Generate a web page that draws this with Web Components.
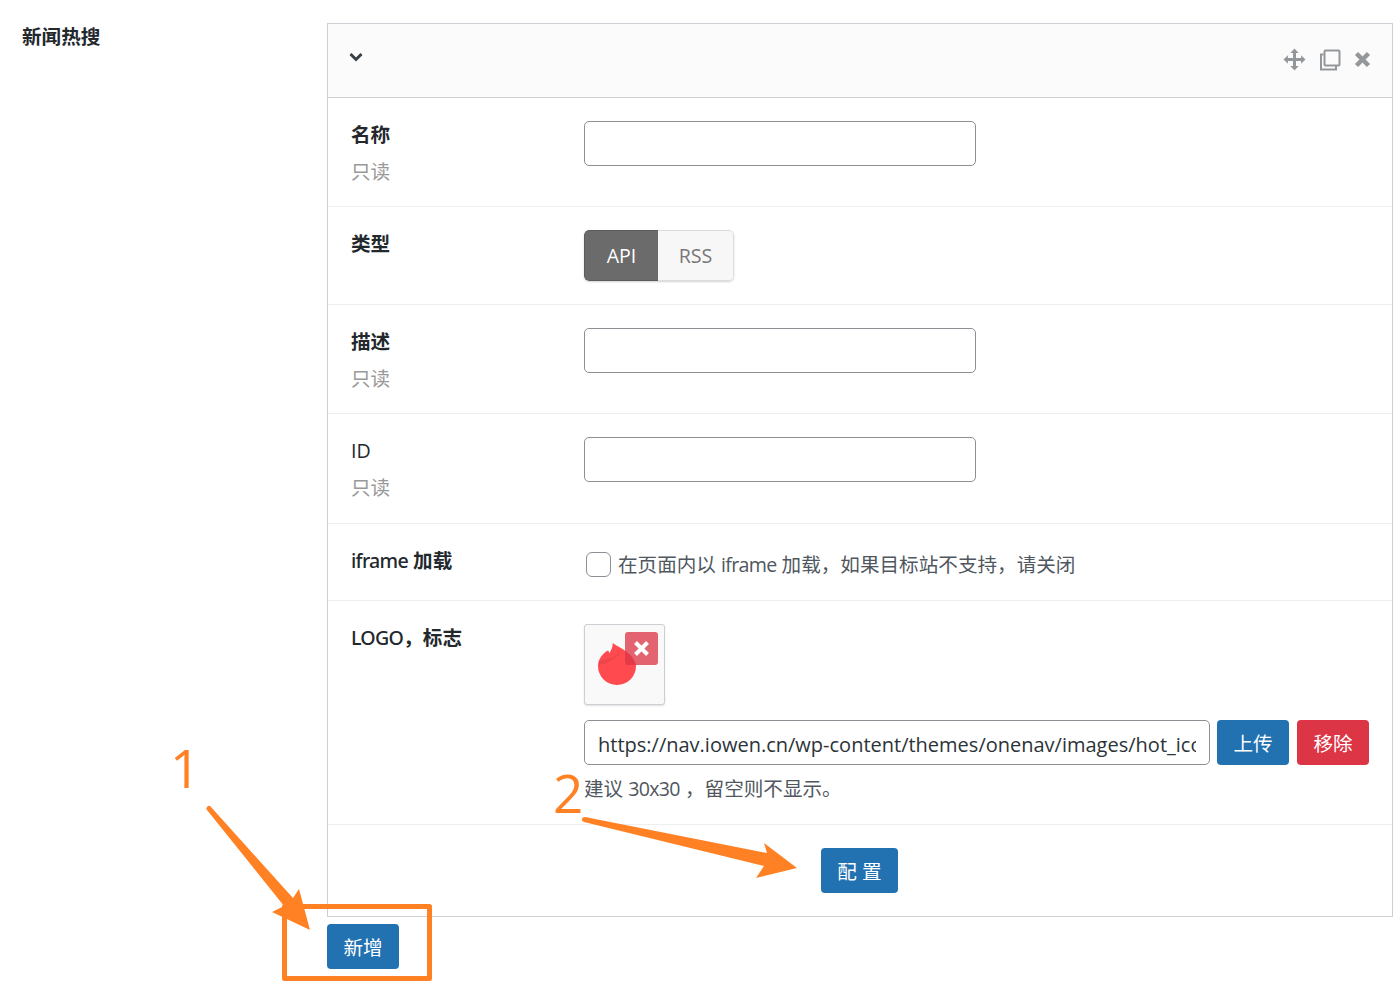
<!DOCTYPE html>
<html lang="zh">
<head>
<meta charset="utf-8">
<title>新闻热搜</title>
<style>
    html, body {
        margin: 0;
        background: #fff;
    }
    body {
        font-family: "Open Sans", "Noto Sans CJK SC", sans-serif;
        font-size: 19.6px;
        line-height: 28px;
        color: #444;
    }
    .lat {
        letter-spacing: -.7px;
    }
    [slot="label"] .lat {
        font-family: "Noto Sans", "Noto Sans CJK SC", sans-serif;
        font-weight: 500;
    }
</style>
</head>
<body>
<hot-page>
    <span slot="title">新闻热搜</span>
    <hot-panel>
        <hot-row hint="只读" pad="40"><b slot="label">名称</b><hot-input></hot-input></hot-row>
        <hot-row pad="23"><b slot="label">类型</b><hot-toggle></hot-toggle></hot-row>
        <hot-row hint="只读" pad="40"><b slot="label">描述</b><hot-input></hot-input></hot-row>
        <hot-row hint="只读" pad="41"><span slot="label">ID</span><hot-input></hot-input></hot-row>
        <hot-row pad="23"><span slot="label"><span class="lat">iframe</span> <b>加载</b></span><hot-check>在页面内以 <span class="lat">iframe</span> 加载，如果目标站不支持，请关闭</hot-check></hot-row>
        <hot-row pad="21"><span slot="label"><span class="lat">LOGO</span><b>，标志</b></span><hot-upload></hot-upload></hot-row>
        <hot-button slot="footer">配 置</hot-button>
    </hot-panel>
    <hot-button slot="add">新增</hot-button>
</hot-page>
<hot-marks></hot-marks>

<script>
class HotPage extends HTMLElement {
    constructor () {
        super ();
        this.attachShadow ({mode: 'open'});
        this.shadowRoot.innerHTML = `
<style>
    :host { display: grid; grid-template-columns: 327px 1066px; }
    .title { padding: 23px 0 0 22px; line-height: 28px; font-weight: 700; color: #23282d; }
    .main { padding-top: 23px; }
    .add { margin-top: 7px; }
</style>
<div class="title"><slot name="title"></slot></div>
<div class="main">
    <slot></slot>
    <div class="add"><slot name="add"></slot></div>
</div>`;
    }
}

class HotPanel extends HTMLElement {
    constructor () {
        super ();
        this.attachShadow ({mode: 'open'});
        this.shadowRoot.innerHTML = `
<style>
    :host { display: block; border: 1px solid #ccd0d4; }
    header { display: flex; align-items: center; height: 73px; padding: 0 21px 0 20px; background: #fbfbfb; border-bottom: 1px solid #ccd0d4; }
    .tools { margin-left: auto; display: flex; align-items: center; gap: 13px; margin-top: -2px; }
    .tools svg:first-child { margin-right: -1px; }
    .chev { margin-top: -7px; }
    footer { display: flex; justify-content: center; padding: 23px 0; height: 45px; }
    svg { display: block; }
    ::slotted(hot-button) { margin-right: 1px; }
</style>
<header>
    <svg class="chev" width="16" height="12" viewBox="0 0 16 12"><path d="M2.500 3 8 8.500 13.500 3" fill="none" stroke="#3a3f45" stroke-width="3"/></svg>
    <div class="tools">
        <svg width="23" height="23" viewBox="0 0 23 23" fill="#94979a"><path d="M11.500.5l4.200 4.400h-2.700v5.100h5.100V7.300l4.400 4.200-4.400 4.200v-2.700h-5.100v5.100h2.700l-4.200 4.400-4.200-4.400h2.700v-5.100H4.900v2.700L.5 11.500l4.400-4.200V10H10V4.900H7.300z"/></svg>
        <svg width="23" height="23" viewBox="0 0 23 23" fill="none" stroke="#94979a" stroke-width="2"><path d="M5.500 6.500H3v15h15v-3.500"/><rect x="6.500" y="2.500" width="15" height="15" rx="1"/></svg>
        <svg width="17" height="17" viewBox="0 0 17 17"><path d="M2.500 2.500l12 12M14.500 2.500l-12 12" stroke="#94979a" stroke-width="4.500"/></svg>
    </div>
</header>
<slot></slot>
<footer><slot name="footer"></slot></footer>`;
    }
}

class HotRow extends HTMLElement {
    constructor () {
        super ();
        this.attachShadow ({mode: 'open'});
        this.shadowRoot.innerHTML = `
<style>
    :host { display: grid; grid-template-columns: 233px 1fr; padding: 23px 23px 0; border-bottom: 1px solid #eee; }
    .label { color: #23282d; line-height: 28px; }
    .hint { color: #999; line-height: 28px; margin-top: 9px; }
    .hint:empty { display: none; }
</style>
<div>
    <div class="label"><slot name="label"></slot></div>
    <div class="hint"></div>
</div>
<div class="ctl"><slot></slot></div>`;
    }

    connectedCallback () {
        this.shadowRoot.querySelector (".hint").textContent = this.getAttribute ("hint") || "";
        this.shadowRoot.querySelector (".ctl").style.paddingBottom = this.getAttribute ("pad") + "px";
    }
}

class HotInput extends HTMLElement {
    constructor () {
        super ();
        this.attachShadow ({mode: 'open'});
        this.shadowRoot.innerHTML = `
<style>
    :host { display: block; width: 392px; }
    input { display: block; width: 100%; height: 45px; box-sizing: border-box; border: 1px solid #8c8f94; border-radius: 5px; background: #fff; padding: 0 13px; font: inherit; color: #2c3338; outline: 0; }
</style>
<input type="text">`;
    }
}

class HotToggle extends HTMLElement {
    constructor () {
        super ();
        this.attachShadow ({mode: 'open'});
        this.shadowRoot.innerHTML = `
<style>
    :host { display: inline-flex; height: 51px; border-radius: 5px; box-shadow: 0 1px 2px rgba(0,0,0,.18); overflow: hidden; line-height: 49px; vertical-align: top; }
    span { display: block; text-align: center; box-sizing: border-box; }
    .on { width: 74px; background: #6b6b6b; color: #fff; border: 1px solid #5c5c5c; border-right: 0; border-radius: 5px 0 0 5px; }
    .off { width: 76px; background: #f7f7f7; color: #777; border: 1px solid #ddd; border-left: 0; border-radius: 0 5px 5px 0; }
</style>
<span class="on">API</span><span class="off">RSS</span>`;
    }
}

class HotCheck extends HTMLElement {
    constructor () {
        super ();
        this.attachShadow ({mode: 'open'});
        this.shadowRoot.innerHTML = `
<style>
    :host { display: flex; align-items: center; gap: 7px; padding-left: 2px; height: 29px; margin-top: 3px; margin-bottom: -2px; color: #50575e; }
    i { display: block; width: 25px; height: 25px; box-sizing: border-box; border: 1px solid #8c8f94; border-radius: 6px; background: #fff; }
</style>
<i></i><span><slot></slot></span>`;
    }
}

class HotButton extends HTMLElement {
    constructor () {
        super ();
        this.attachShadow ({mode: 'open'});
        this.shadowRoot.innerHTML = `
<style>
    :host { display: inline-block; box-sizing: border-box; height: 45px; min-width: 72px; padding: 0 16px; line-height: 47px; background: #2271b1; color: #fff; border-radius: 4px; text-align: center; white-space: nowrap; }
    :host([danger]) { background: #dc3545; }
</style>
<slot></slot>`;
    }
}

class HotUpload extends HTMLElement {
    constructor () {
        super ();
        this.attachShadow ({mode: 'open'});
        this.shadowRoot.innerHTML = `
<style>
    :host { display: block; }
    .thumb { position: relative; width: 81px; height: 81px; box-sizing: border-box; border: 1px solid #ccd0d4; border-radius: 3px; background: #f9f9f9; box-shadow: 0 1px 2px rgba(0,0,0,.12); }
    .thumb svg { display: block; }
    .del { position: absolute; left: 40px; top: 7px; width: 33px; height: 33px; border-radius: 3px; background: rgba(220,53,69,.76); display: flex; align-items: center; justify-content: center; }
    .line { display: flex; gap: 8px; margin-top: 15px; }
    .url { width: 626px; height: 45px; box-sizing: border-box; border: 1px solid #8c8f94; border-radius: 5px; padding: 3px 13px 0; font: inherit; font-size: 20px; color: #2c3338; background: #fff; outline: 0; margin-right: -1px; }
    .help { margin-top: 10px; color: #50575e; }
    .help span { letter-spacing: -.7px; }
    hot-button { padding: 0; }
</style>
<div class="thumb">
    <svg width="79" height="79" viewBox="0 0 79 79">
        <path d="M27.700 18C31 21 37 23 41 26.500C45 29 51 36 51 41A19 19 0 1 1 13 41C13 34 18 28 23 25.500C24 26.500 24.300 27.500 24 28.500C26 26 28 22 27.700 18z" fill="#ff4a50"/>
        <path d="M14 36C20 34 27 34 36 27C30 35 22 38 14 40z" fill="#c73a42" opacity=".3"/>
    </svg>
    <div class="del"><svg width="17" height="17" viewBox="0 0 17 17"><path d="M2.500 2.500l12 12M14.500 2.500l-12 12" stroke="#fff" stroke-width="4"/></svg></div>
</div>
<div class="line">
    <input class="url" type="text" value="https://nav.iowen.cn/wp-content/themes/onenav/images/hot_icon.png">
    <hot-button>上传</hot-button>
    <hot-button danger>移除</hot-button>
</div>
<div class="help">建议 <span>30x30</span> ，留空则不显示。</div>`;
    }
}

// les fleches orange posees par-dessus la capture
class HotMarks extends HTMLElement {
    constructor () {
        super ();
        this.attachShadow ({mode: 'open'});
        this.shadowRoot.innerHTML = `
<style>
    :host { position: absolute; left: 0; top: 0; width: 1399px; height: 995px; pointer-events: none; }
    svg { display: block; }
    text { font-family: "Open Sans", sans-serif; font-size: 53px; fill: #ff8124; }
</style>
<svg width="1399" height="995" viewBox="0 0 1399 995">
    <text x="170" y="788">1</text>
    <text x="553" y="813">2</text>
    <path d="M207 810a2.500 2.500 0 0 1 4-3l82 91 6-9 11 41-38-18 12-6z" fill="#ff8124"/>
    <path d="M583 817.500l2-.5 182 36-3-10 33 25-41 10 8-12-180-44a2.500 2.500 0 0 1-1-4.500z" fill="#ff8124"/>
    <rect x="284.500" y="906.500" width="145" height="72" fill="none" stroke="#ff8124" stroke-width="5" stroke-linejoin="round"/>
</svg>`;
    }
}

customElements.define ("hot-page", HotPage);
customElements.define ("hot-panel", HotPanel);
customElements.define ("hot-row", HotRow);
customElements.define ("hot-input", HotInput);
customElements.define ("hot-toggle", HotToggle);
customElements.define ("hot-check", HotCheck);
customElements.define ("hot-button", HotButton);
customElements.define ("hot-upload", HotUpload);
customElements.define ("hot-marks", HotMarks);
</script>
</body>
</html>
